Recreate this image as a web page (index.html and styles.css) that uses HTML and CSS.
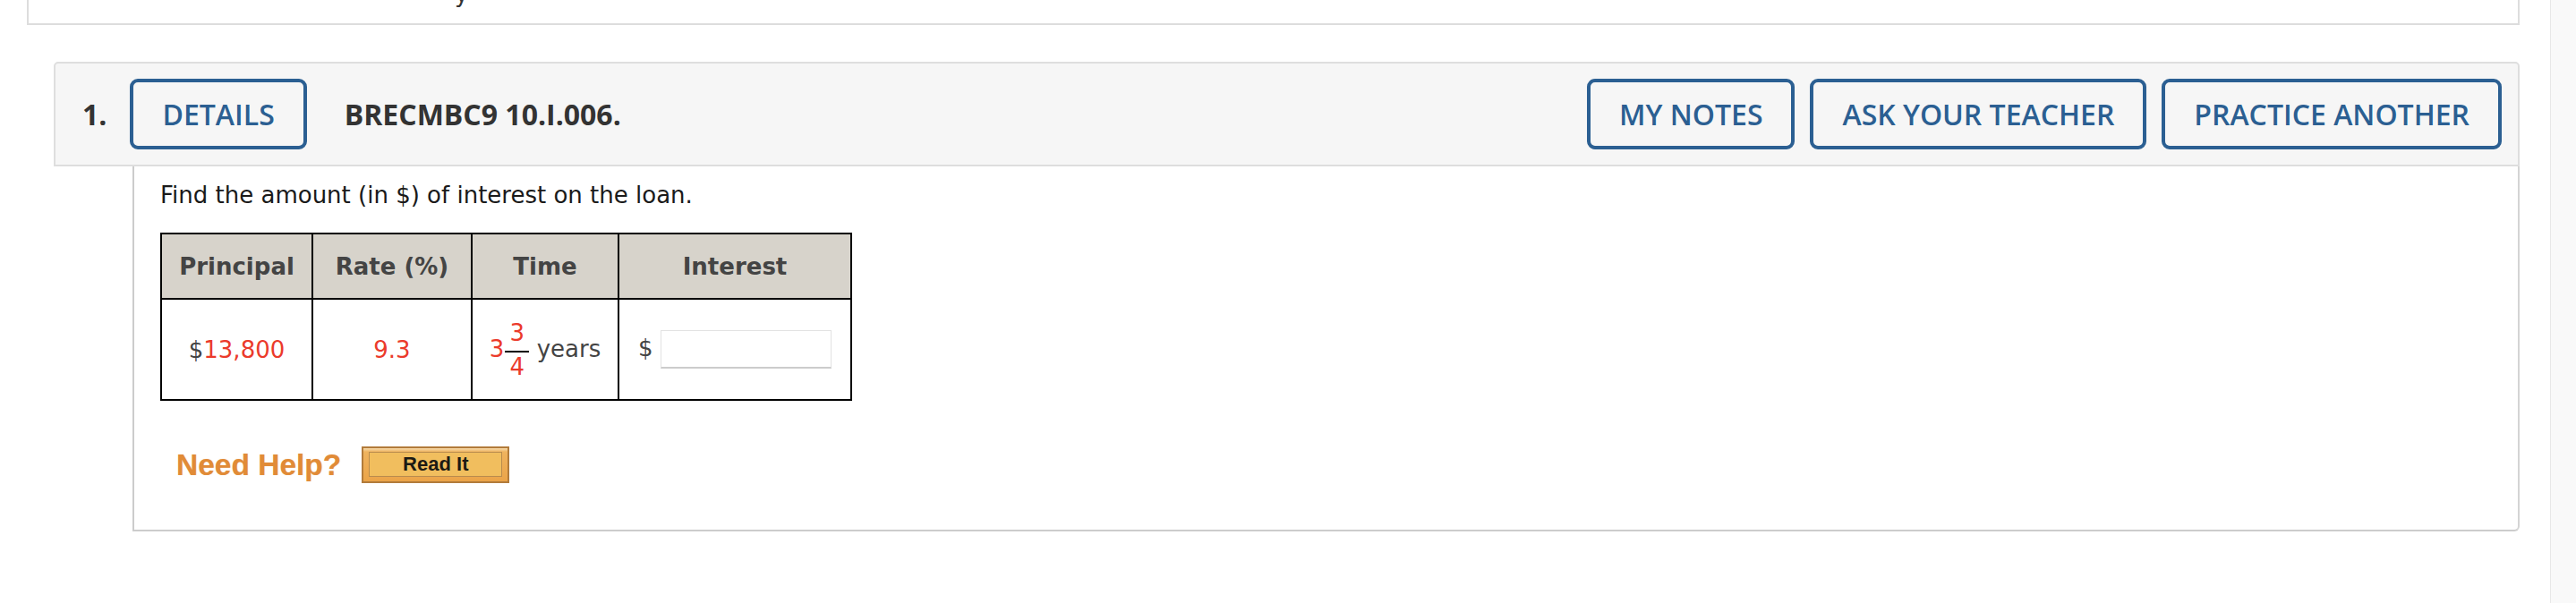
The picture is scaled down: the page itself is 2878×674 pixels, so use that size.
FILE: index.html
```html
<!DOCTYPE html>
<html lang="en">
<head>
<meta charset="utf-8">
<title>Question 1</title>
<link rel="stylesheet" href="styles.css">
</head>
<body>
<div class="screen">
  <div class="main">
    <div class="prev-box"><div class="prev-text">y</div></div>

    <div class="question">
      <div class="q-header">
        <span class="q-num">1.</span>
        <button class="btn">DETAILS</button>
        <span class="q-id">BRECMBC9 10.I.006.</span>
        <div class="q-actions">
          <button class="btn">MY NOTES</button>
          <button class="btn">ASK YOUR TEACHER</button>
          <button class="btn">PRACTICE ANOTHER</button>
        </div>
      </div>

      <div class="q-body">
        <p class="prompt">Find the amount (in $) of interest on the loan.</p>

        <table class="loan">
          <colgroup>
            <col class="c-principal">
            <col class="c-rate">
            <col class="c-time">
            <col class="c-interest">
          </colgroup>
          <tr class="head">
            <th>Principal</th>
            <th>Rate (%)</th>
            <th>Time</th>
            <th>Interest</th>
          </tr>
          <tr class="vals">
            <td><span class="grey">$</span><span class="red">13,800</span></td>
            <td><span class="red">9.3</span></td>
            <td><span class="red">3</span><span class="frac"><span class="num red">3</span><span class="bar"></span><span class="den red">4</span></span> <span class="grey">years</span></td>
            <td><span class="grey">$</span> <input class="answer" type="text" aria-label="Interest"></td>
          </tr>
        </table>

        <div class="help">
          <span class="need-help">Need Help?</span>
          <span class="read-it"><span class="read-it-inner">Read It</span></span>
        </div>
      </div>
    </div>
  </div>
  <div class="scrollbar"></div>
</div>
</body>
</html>
```

FILE: styles.css
```css
html, body {
  margin: 0;
  padding: 0;
  background: #ffffff;
}

.screen {
  display: flex;
  width: 2878px;
  height: 674px;
  overflow: hidden;
}

.main {
  flex: 1;
  padding-right: 34px;
}

.scrollbar {
  width: 28px;
  flex: none;
  background: #f9f9f9;
  border-left: 1px solid #e8e8e8;
}

/* previous (cut off) block */
.prev-box {
  margin-left: 30px;
  height: 26px;
  border: 2px solid #dddddd;
  border-top: none;
  overflow: hidden;
  padding-left: 476px;
}

.prev-text {
  margin-top: -22px;
  font-family: "DejaVu Sans", Verdana, sans-serif;
  font-size: 26px;
  line-height: 30px;
  color: #333333;
}

/* question */
.question {
  margin-top: 41px;
}

.q-header {
  margin-left: 60px;
  display: flex;
  align-items: center;
  padding: 17px 18px 17px 30px;
  background: #f6f6f6;
  border: 2px solid #dedede;
  border-radius: 5px 5px 0 0;
  font-family: "Open Sans", "Liberation Sans", sans-serif;
  color: #333333;
}

.q-num {
  font-size: 32px;
  font-weight: 700;
  margin-right: 26px;
}

.q-id {
  font-size: 32px;
  font-weight: 700;
  margin-left: 42px;
}

.btn {
  box-sizing: border-box;
  height: 79px;
  padding: 0 32px;
  background: transparent;
  border: 4px solid #2b5f92;
  border-radius: 9px;
  font-family: "Open Sans", "Liberation Sans", sans-serif;
  font-size: 32px;
  font-weight: 600;
  color: #2b5f92;
  line-height: 1;
}

.q-actions {
  margin-left: auto;
  display: flex;
  gap: 17px;
}

.q-body {
  margin-left: 148px;
  border-left: 2px solid #cccccc;
  border-right: 2px solid #d4d4d4;
  border-bottom: 2px solid #cccccc;
  border-bottom-right-radius: 6px;
  padding: 17px 30px 52px 29px;
  font-family: "DejaVu Sans", Verdana, sans-serif;
  font-size: 26px;
}

.prompt {
  margin: 0;
  line-height: 30px;
  color: #1a1a1a;
}

/* table */
.loan {
  margin-top: 27px;
  border-collapse: collapse;
  border: 2px solid #000000;
  table-layout: fixed;
  width: 771px;
}

.c-principal { width: 169px; }
.c-rate { width: 178px; }
.c-time { width: 164px; }
.c-interest { width: 260px; }

.loan th,
.loan td {
  border: 2px solid #000000;
  padding: 0;
  text-align: center;
  vertical-align: middle;
  white-space: nowrap;
}

.loan tr.head {
  height: 73px;
}

.loan th {
  background: #d7d3cb;
  color: #444444;
  font-weight: 700;
  font-size: 26px;
}

.loan tr.vals {
  height: 113px;
}

.loan td {
  line-height: 30px;
}

.red { color: #eb3a2b; }
.grey { color: #444444; }

.frac {
  display: inline-flex;
  flex-direction: column;
  align-items: stretch;
  vertical-align: middle;
  line-height: 24px;
  margin-left: 1px;
}

.frac .num {
  padding-bottom: 8px;
}

.frac .bar {
  height: 2px;
  background: #000000;
  margin: 0;
  width: 27px;
}

.frac .den {
  padding-top: 4px;
}

.answer {
  box-sizing: border-box;
  width: 191px;
  height: 43px;
  vertical-align: middle;
  border: 1px solid #e2e2e2;
  border-bottom: 2px solid #cccccc;
  background: #ffffff;
  padding: 0 8px;
  font-size: 24px;
  margin: 0;
}

/* help */
.help {
  margin-top: 51px;
  display: flex;
  align-items: center;
  padding-left: 18px;
}

.need-help {
  font-family: "Liberation Sans", Arial, sans-serif;
  font-weight: 700;
  font-size: 33.5px;
  color: #e18b37;
  text-shadow: 0 0 1px rgba(225, 139, 55, 0.5);
  margin-right: 23px;
}

.read-it {
  box-sizing: border-box;
  width: 165px;
  height: 41px;
  border: 2px solid #b27b3a;
  background: linear-gradient(#f8dcae 0, #efb35e 4px, #eba449 100%);
  padding: 4px 6px 5px 6px;
  display: flex;
}

.read-it-inner {
  flex: 1;
  display: flex;
  align-items: center;
  justify-content: center;
  border: 1px solid #b98b4e;
  background: #f1be5e;
  font-family: "Liberation Sans", Arial, sans-serif;
  font-weight: 700;
  font-size: 22px;
  color: #1c1a14;
}
```
